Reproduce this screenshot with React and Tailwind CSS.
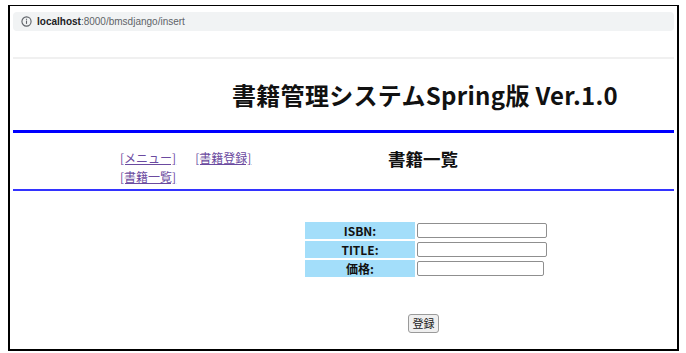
import React from 'react';

const jp = { fontFamily: '"Noto Sans CJK JP", sans-serif' };

function InfoIcon() {
  return (
    <svg width="11" height="11" viewBox="0 0 12 12" className="shrink-0">
      <circle cx="6" cy="6" r="5" fill="none" stroke="#5f6368" strokeWidth="1.2" />
      <rect x="5.4" y="5" width="1.2" height="3.6" fill="#5f6368" />
      <rect x="5.4" y="3" width="1.2" height="1.2" fill="#5f6368" />
    </svg>
  );
}

export default function App() {
  const rows = ['ISBN:', 'TITLE:', '価格:'];

  return (
    <div className="w-[686px] h-[353px] bg-white" style={jp}>
      <div className="pt-[5px] pl-[8px]">
        <div className="w-[671px] h-[346px] border-2 border-t border-black flex flex-col">
          {/* browser address bar */}
          <div className="mx-[3px] mt-[6px] h-[19px] rounded-[4px] bg-[#f1f3f4] flex items-center gap-[5px] px-[8px]">
            <InfoIcon />
            <div className="text-[10px] leading-none text-[#5f6368]" style={{ fontFamily: '"Liberation Sans", sans-serif' }}>
              <span className="text-[#202124] font-bold">localhost</span>:8000/bmsdjango/insert
            </div>
          </div>
          <div className="mx-[3px] mt-[26px] h-[2px] bg-[#f0f0f0]" />

          {/* page header */}
          <div className="mx-[3px] h-[71px] flex items-center">
            <h1 className="ml-[219px] text-[24px] font-bold text-[#111] leading-none tracking-[0.3px]">
              書籍管理システムSpring版 Ver.1.0
            </h1>
          </div>
          <div className="mx-[3px] h-[3px] bg-[#0000ff]" />

          {/* nav */}
          <div className="mx-[3px] h-[56px] flex items-start pt-[15px]">
            <div className="ml-[107px] w-[190px] text-[12px] leading-[19px] text-[#6b4aa0]">
              <a className="underline">[メニュー]</a>
              <a className="underline ml-[19px]">[書籍登録]</a>
              <br />
              <a className="underline">[書籍一覧]</a>
            </div>
            <h2 className="ml-[78px] text-[17.5px] font-bold leading-[22px] text-[#111]">書籍一覧</h2>
          </div>
          <div className="mx-[3px] h-[2px] bg-[#3333ff]" />

          {/* form */}
          <div className="mt-[31px] ml-[295px] flex flex-col gap-[2px]">
            {rows.map((r, i) => (
              <div key={r} className="flex items-center gap-[2px]">
                <div className="w-[110px] h-[17px] bg-[#a3defa] flex items-center justify-center text-[12px] font-bold text-[#111]">
                  {r}
                </div>
                <div
                  className={
                    (i === 2 ? 'w-[127px]' : 'w-[130px]') +
                    ' h-[15px] border border-[#8f8f8f] rounded-[2px] bg-white'
                  }
                />
              </div>
            ))}
          </div>

          <div className="mt-[37px] ml-[398px]">
            <button className="w-[31px] h-[19px] border border-[#9a9a9a] rounded-[3px] bg-[#efefef] text-[11px] text-[#222] flex items-center justify-center">
              登録
            </button>
          </div>
        </div>
      </div>
    </div>
  );
}
